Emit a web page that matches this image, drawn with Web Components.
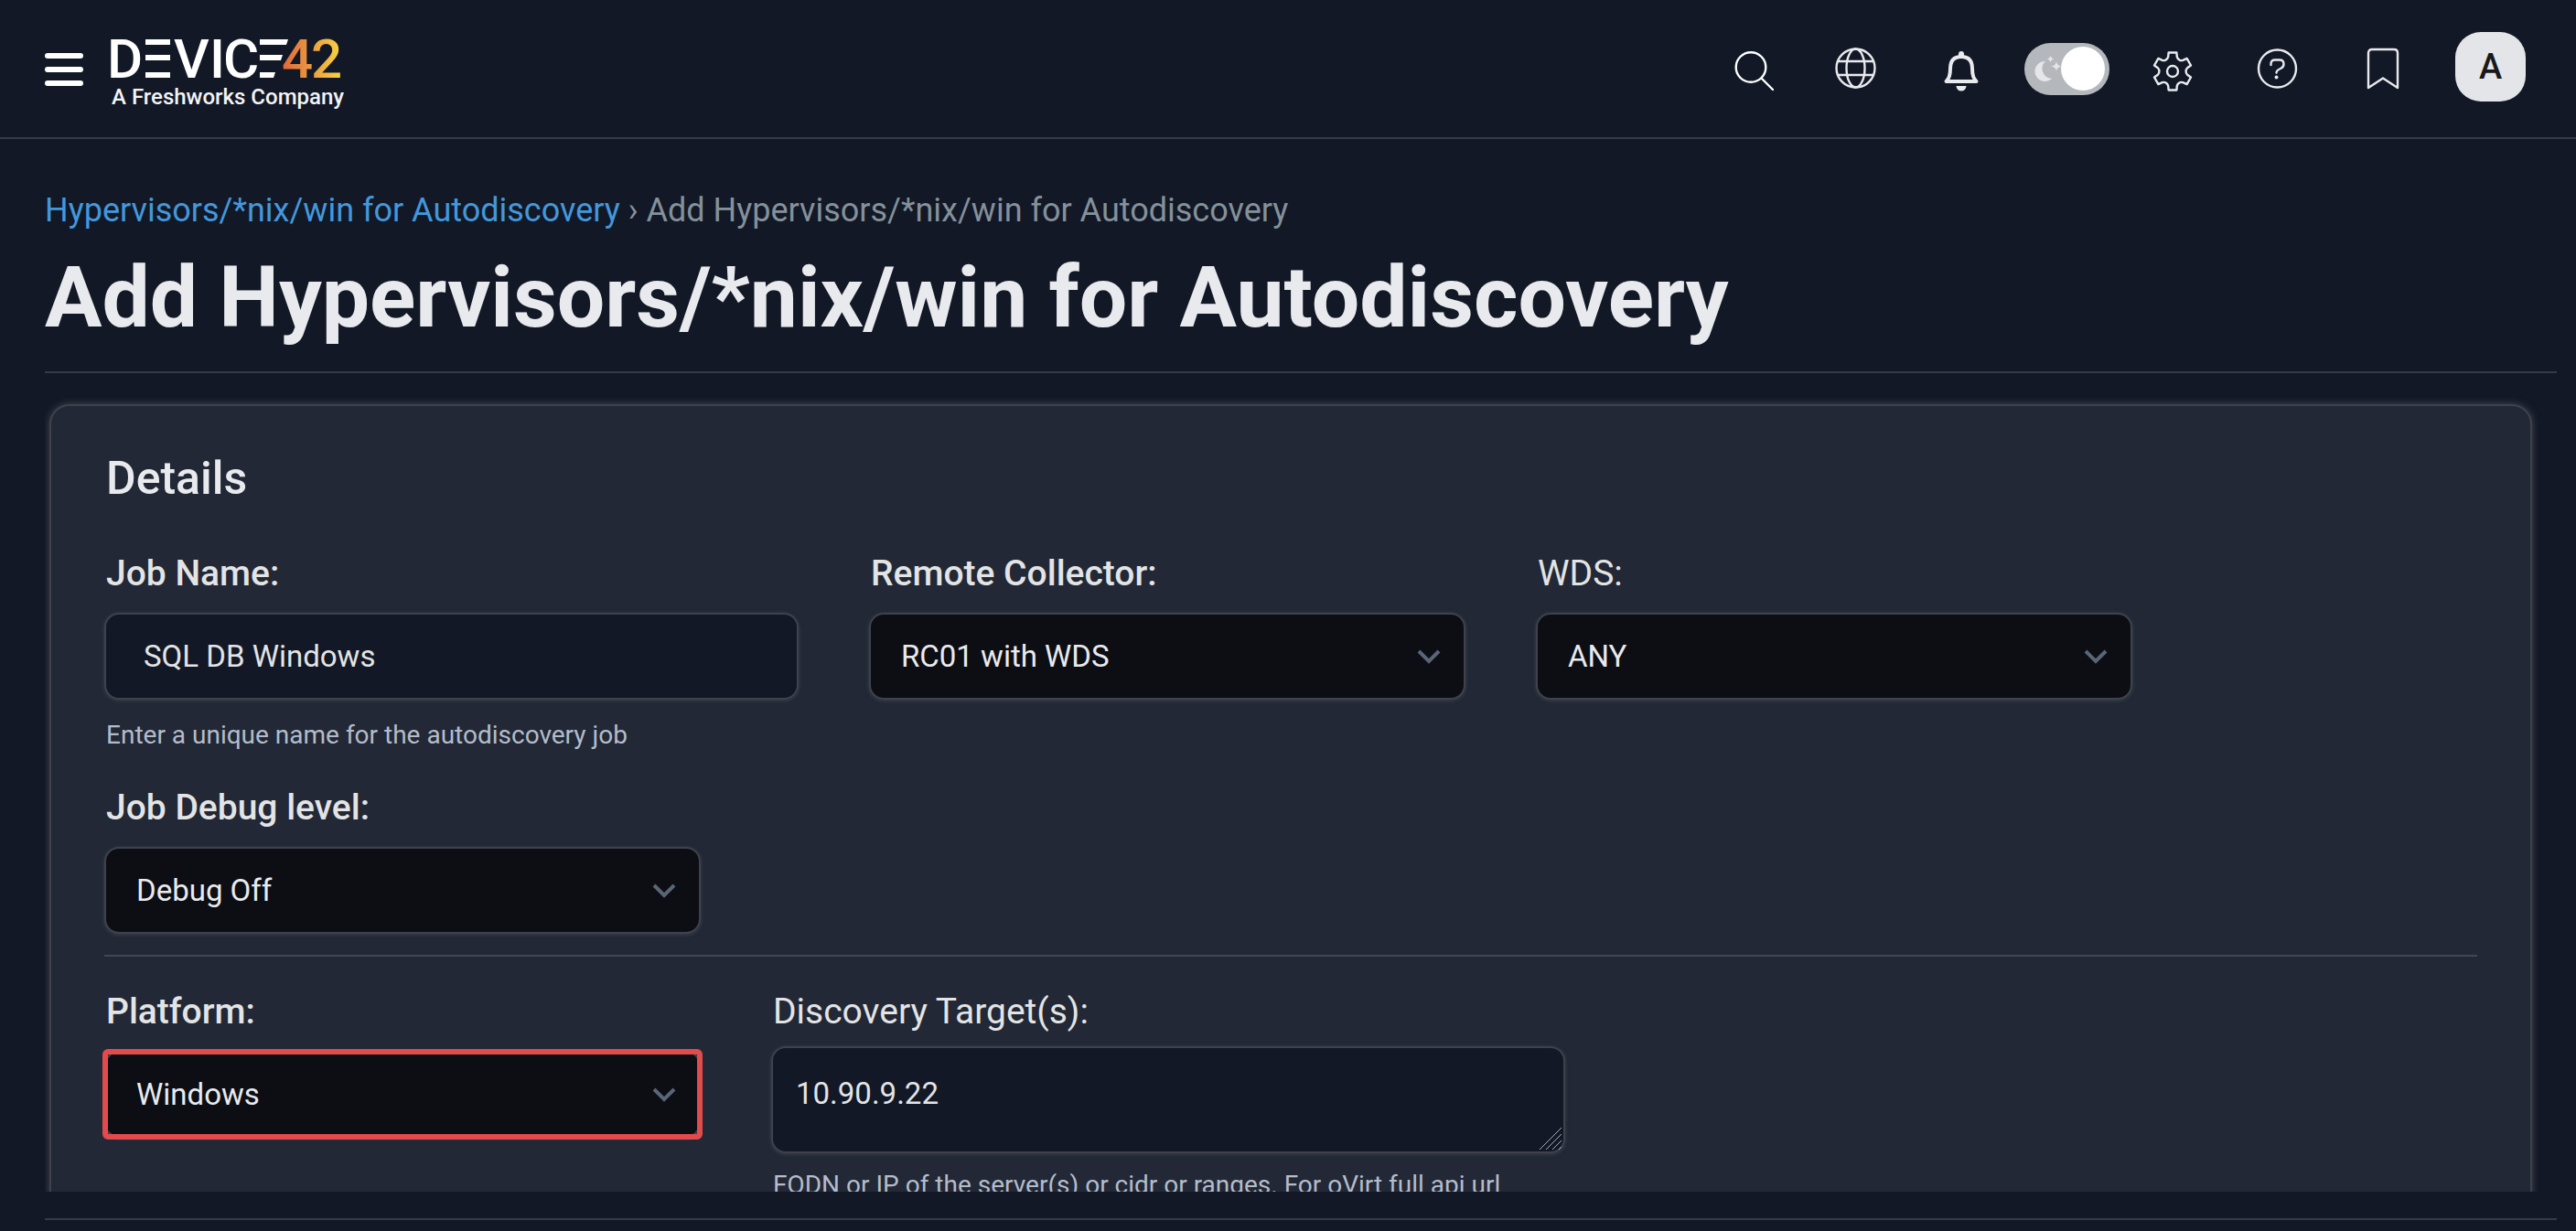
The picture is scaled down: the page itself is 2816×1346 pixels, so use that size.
<!DOCTYPE html>
<html lang="en">
<head>
<meta charset="utf-8">
<title>Add Hypervisors/*nix/win for Autodiscovery</title>
<style>
  :root {
    --bg: #121826; --card: #222835; --line: #363a47; --edge: #3d424d;
    --text: #e9eaee; --label: #e2e4e5; --muted: #b4bccb; --link: #4398dc;
    --crumb: #84919b; --select: #0c0e13; --chevron: #5a6577; --alert: #e24a4c;
    --ui: Roboto, "Liberation Sans", sans-serif;
  }
  html, body { margin: 0; height: 100%; background: var(--bg); color: var(--text); }
  body { font-family: var(--ui); overflow: hidden; }
</style>
</head>
<body>
<d42-app>
  <d42-header slot="header"></d42-header>
  <d42-page-title slot="title" parent="Hypervisors/*nix/win for Autodiscovery" current="Add Hypervisors/*nix/win for Autodiscovery"></d42-page-title>
  <d42-panel heading="Details">
    <d42-row>
      <d42-text-field label="Job Name:" value="SQL DB Windows" help="Enter a unique name for the autodiscovery job" strong></d42-text-field>
      <d42-select-field label="Remote Collector:" value="RC01 with WDS" strong></d42-select-field>
      <d42-select-field label="WDS:" value="ANY"></d42-select-field>
    </d42-row>
    <d42-row>
      <d42-select-field label="Job Debug level:" value="Debug Off" strong></d42-select-field>
    </d42-row>
    <d42-row divided>
      <d42-select-field label="Platform:" value="Windows" strong highlighted></d42-select-field>
      <d42-area-field label="Discovery Target(s):" value="10.90.9.22" help="FQDN or IP of the server(s) or cidr or ranges. For oVirt full api url"></d42-area-field>
    </d42-row>
  </d42-panel>
</d42-app>

<script>
const define = (name, render) => customElements.define(name, class extends HTMLElement {
  constructor() { super(); this.attachShadow({ mode: "open" }); }
  connectedCallback() { this.shadowRoot.innerHTML = render(this); }
});

// Outline of a cog with six teeth round (cx, cy).
const cog = (cx, cy) => {
  const at = (deg, r) => {
    const a = deg * Math.PI / 180;
    return `${(cx + r * Math.sin(a)).toFixed(1)} ${(cy - r * Math.cos(a)).toFixed(1)}`;
  };
  let d = "";
  for (let t = 0; t < 360; t += 60) {
    d += `${t ? "L" : "M"}${at(t - 12, 21)}L${at(t + 12, 21)}L${at(t + 17, 16.5)}Q${at(t + 22, 14.6)} ${at(t + 30, 14.6)}Q${at(t + 38, 14.6)} ${at(t + 43, 16.5)}`;
  }
  return d + "Z";
};

define("d42-app", () => `
  <style>
    :host { display: flex; flex-direction: column; height: 100vh; }
    main { flex: 1; min-height: 0; display: flex; flex-direction: column; padding: 0 21px 0 49px; }
    .scroll { flex: 1; min-height: 0; overflow: hidden; padding: 34px 27px 0 5px; }
    footer { margin-top: 29px; height: 12px; border-top: 2px solid var(--line); }
  </style>
  <slot name="header"></slot>
  <main>
    <slot name="title"></slot>
    <div class="scroll"><slot></slot></div>
    <footer></footer>
  </main>`);

define("d42-logo", () => `
  <style>
    :host { display: block; }
    a, svg { display: block; }
    .word { font: 500 60px Roboto, sans-serif; fill: #fff; }
    .by { font: 500 24px Roboto, sans-serif; fill: #f3f4f6; }
  </style>
  <a href="#home" aria-label="Device42, a Freshworks company">
    <svg width="270" height="112" viewBox="-8 -16 270 112">
      <defs><linearGradient id="sun" gradientUnits="userSpaceOnUse" x1="190" y1="0" x2="251" y2="0">
        <stop offset="0" stop-color="#e06c3c"/><stop offset=".5" stop-color="#eb9c40"/><stop offset="1" stop-color="#f8d341"/>
      </linearGradient></defs>
      <g class="word">
        <text x="-4" y="50">D</text>
        <path d="M38 8h27v6H38zM38 25h27v6H38zM38 44h27v6H38z"/>
        <text x="69" y="50">V</text>
        <text x="108" y="50">I</text>
        <text x="123" y="50">C</text>
        <path d="M163 8h31l-2 6h-29zM163 25h25l-2 6h-23zM163 44h17l-2 6h-15z"/>
        <text x="187" y="50" fill="url(#sun)">4</text>
        <text x="219" y="50" fill="url(#sun)">2</text>
      </g>
      <text class="by" x="1" y="79">A Freshworks Company</text>
    </svg>
  </a>`);

define("d42-switch", () => `
  <style>
    :host { display: block; }
    label { position: relative; display: flex; align-items: center; justify-content: flex-end; width: 93px; height: 57px; box-sizing: border-box; padding-right: 5px; border-radius: 29px; background: #b4b7bc; }
    input { appearance: none; margin: 0; width: 48px; height: 48px; border-radius: 50%; background: #fff; }
    svg { position: absolute; left: 10px; top: 12px; }
  </style>
  <label aria-label="Dark mode">
    <svg width="32" height="34" viewBox="0 0 32 34" fill="#e4e6ea"><path d="M13 8A11 11 0 1 0 20 27A11 11 0 0 1 13 8Z"/><path d="M18.500 1.500Q19 5 22.500 5.500Q19 6 18.500 9.500Q18 6 14.500 5.500Q18 5 18.500 1.500ZM25 8Q25.500 13 31 13.500Q25.500 14 25 19Q24.500 14 19 13.500Q24.500 13 25 8Z"/></svg>
    <input type="checkbox" role="switch" checked>
  </label>`);

define("d42-header", () => `
  <style>
    :host { display: flex; justify-content: space-between; align-items: center; box-sizing: border-box; height: 152px; padding: 0 33px 0 49px; border-bottom: 2px solid var(--line); }
    button { display: block; padding: 0; border: 0; background: none; color: #e9eaee; }
    svg { display: block; fill: none; stroke: currentColor; stroke-width: 2.400; stroke-linecap: round; stroke-linejoin: round; }
    .solid { fill: currentColor; stroke: none; }
    .brand { display: flex; align-items: center; gap: 22px; }
    .menu { display: flex; flex-direction: column; gap: 9px; padding-top: 2px; color: #fff; }
    .menu i { display: block; width: 42px; height: 6px; border-radius: 3px; background: currentColor; }
    .search { color: #fff; }
    nav { display: grid; grid-template-columns: repeat(7, 115px) 121px; align-items: center; justify-items: center; }
    .avatar { width: 77px; height: 76px; margin-bottom: 4px; border-radius: 28px; background: #e4e5e8; color: #191919; font: 500 38px/76px Roboto, sans-serif; }
  </style>
  <div class="brand">
    <button class="menu" aria-label="Menu"><i></i><i></i><i></i></button>
    <d42-logo></d42-logo>
  </div>
  <nav aria-label="Tools">
    <button class="search" aria-label="Search"><svg width="48" height="54" viewBox="0 -3 48 54"><circle cx="23" cy="22.500" r="16.300"/><path d="M35 35l12 12"/></svg></button>
    <button aria-label="Language"><svg width="48" height="54" viewBox="0 -3 48 54"><circle cx="22.500" cy="23.500" r="21"/><ellipse cx="22.500" cy="23.500" rx="10" ry="21"/><path d="M4 16h37M4 31h37"/></svg></button>
    <button aria-label="Notifications"><svg width="48" height="54" viewBox="0 -3 48 54"><path style="stroke-width:4" d="M6.500 38H39.500C36 35 35 30 35 24C35 15 31 11 23 11S11 15 11 24C11 30 10 35 6.500 38Z"/><path class="solid" d="M20 11V8a3 3 0 0 1 6 0V11ZM17.500 43h11a5.500 5.500 0 0 1-11 0Z"/></svg></button>
    <d42-switch></d42-switch>
    <button aria-label="Settings"><svg width="48" height="54" viewBox="0 -3 48 54"><path d="${cog(24, 27)}"/><circle cx="24" cy="27" r="6"/></svg></button>
    <button aria-label="Help"><svg width="48" height="54" viewBox="0 -3 48 54"><circle cx="23.500" cy="24" r="20.500"/><path d="M16.500 20V19Q16.500 14.500 21 14.500H26Q30.500 14.500 30.500 19Q30.500 22.500 27 24Q22.500 26 22.500 28.500"/><circle class="solid" cx="22.500" cy="33.500" r="2"/></svg></button>
    <button aria-label="Bookmarks"><svg width="48" height="54" viewBox="0 -3 48 54"><path d="M8 45V7Q8 3 12 3H36Q40 3 40 7V45L24 34.500Z"/></svg></button>
    <button class="avatar" aria-label="Account">A</button>
  </nav>`);

define("d42-page-title", el => `
  <style>
    :host { display: block; padding: 56px 0 26px; border-bottom: 2px solid var(--line); }
    nav { font: 400 36px/44px var(--ui); color: var(--crumb); }
    a { color: var(--link); text-decoration: none; }
    h1 { margin: 20px 0 0; font: 700 93px/108px var(--ui); color: var(--text); white-space: nowrap; }
  </style>
  <nav aria-label="Breadcrumb"><a href="#list">${el.getAttribute("parent")}</a> › <span>${el.getAttribute("current")}</span></nav>
  <h1>${el.getAttribute("current")}</h1>`);

define("d42-panel", el => `
  <style>
    :host { display: block; box-sizing: border-box; padding: 48px 58px 96px; border: 2px solid var(--edge); border-radius: 22px; background: var(--card); box-shadow: 0 0 8px #4b4a52; }
    h2 { margin: 0 0 13px; padding-left: 2px; font: 500 50px/62px var(--ui); color: var(--text); }
  </style>
  <h2>${el.getAttribute("heading")}</h2>
  <slot></slot>`);

define("d42-row", () => `
  <style>
    :host { display: flex; gap: 77px; padding-top: 35px; }
    :host([divided]) { margin-top: 23px; border-top: 2px solid #414652; }
  </style>
  <slot></slot>`);

const fieldStyle = `
  :host { display: block; flex: none; }
  label { display: block; padding-left: 2px; font: 400 39px/50px var(--ui); color: var(--label); }
  :host([strong]) label { font-weight: 500; }
  .box { margin-top: 18px; }
  input, select, textarea { display: block; box-sizing: border-box; margin: 0; border: 2px solid var(--edge); border-radius: 16px; background: var(--bg); color: var(--label); font: 400 33px/46px var(--ui); outline: 0; box-shadow: 0 1px 4px #3d424d; }
  p { margin: 20px 0 0; padding-left: 2px; font: 400 28px/38px var(--ui); color: var(--muted); }`;

define("d42-text-field", el => `
  <style>${fieldStyle}
    input { width: 759px; height: 95px; padding: 0 41px; }
  </style>
  <label for="f">${el.getAttribute("label")}</label>
  <div class="box"><input id="f" type="text" value="${el.getAttribute("value")}"></div>
  <p>${el.getAttribute("help")}</p>`);

define("d42-select-field", el => `
  <style>${fieldStyle}
    .box { display: grid; align-items: center; justify-items: end; }
    select, svg { grid-area: 1 / 1; }
    select { appearance: none; width: 652px; height: 95px; padding: 0 72px 0 33px; background: var(--select); color: var(--text); }
    svg { margin-right: 27px; pointer-events: none; }
    :host([highlighted]) .box { outline: 6px solid var(--alert); outline-offset: -4px; border-radius: 4px; }
  </style>
  <label for="f">${el.getAttribute("label")}</label>
  <div class="box">
    <select id="f"><option>${el.getAttribute("value")}</option></select>
    <svg width="26" height="16" viewBox="0 0 26 16" fill="none" stroke="var(--chevron)" stroke-width="4"><path d="M2 2l11 11L24 2"/></svg>
  </div>`);

define("d42-area-field", el => `
  <style>${fieldStyle}
    .box { position: relative; margin-top: 13px; }
    textarea { width: 868px; height: 117px; padding: 27px 25px 0; resize: none; overflow: hidden; }
    svg { position: absolute; right: 3px; bottom: 3px; }
    p { margin-top: 16px; white-space: nowrap; }
  </style>
  <label for="f">${el.getAttribute("label")}</label>
  <div class="box">
    <textarea id="f" rows="1">${el.getAttribute("value")}</textarea>
    <svg width="26" height="26" viewBox="0 0 26 26" stroke="#a9acb2"><path d="M1 25L25 1M8 25L25 8M15 25L25 15M22 25L25 22"/></svg>
  </div>
  <p>${el.getAttribute("help")}</p>`);
</script>
</body>
</html>
